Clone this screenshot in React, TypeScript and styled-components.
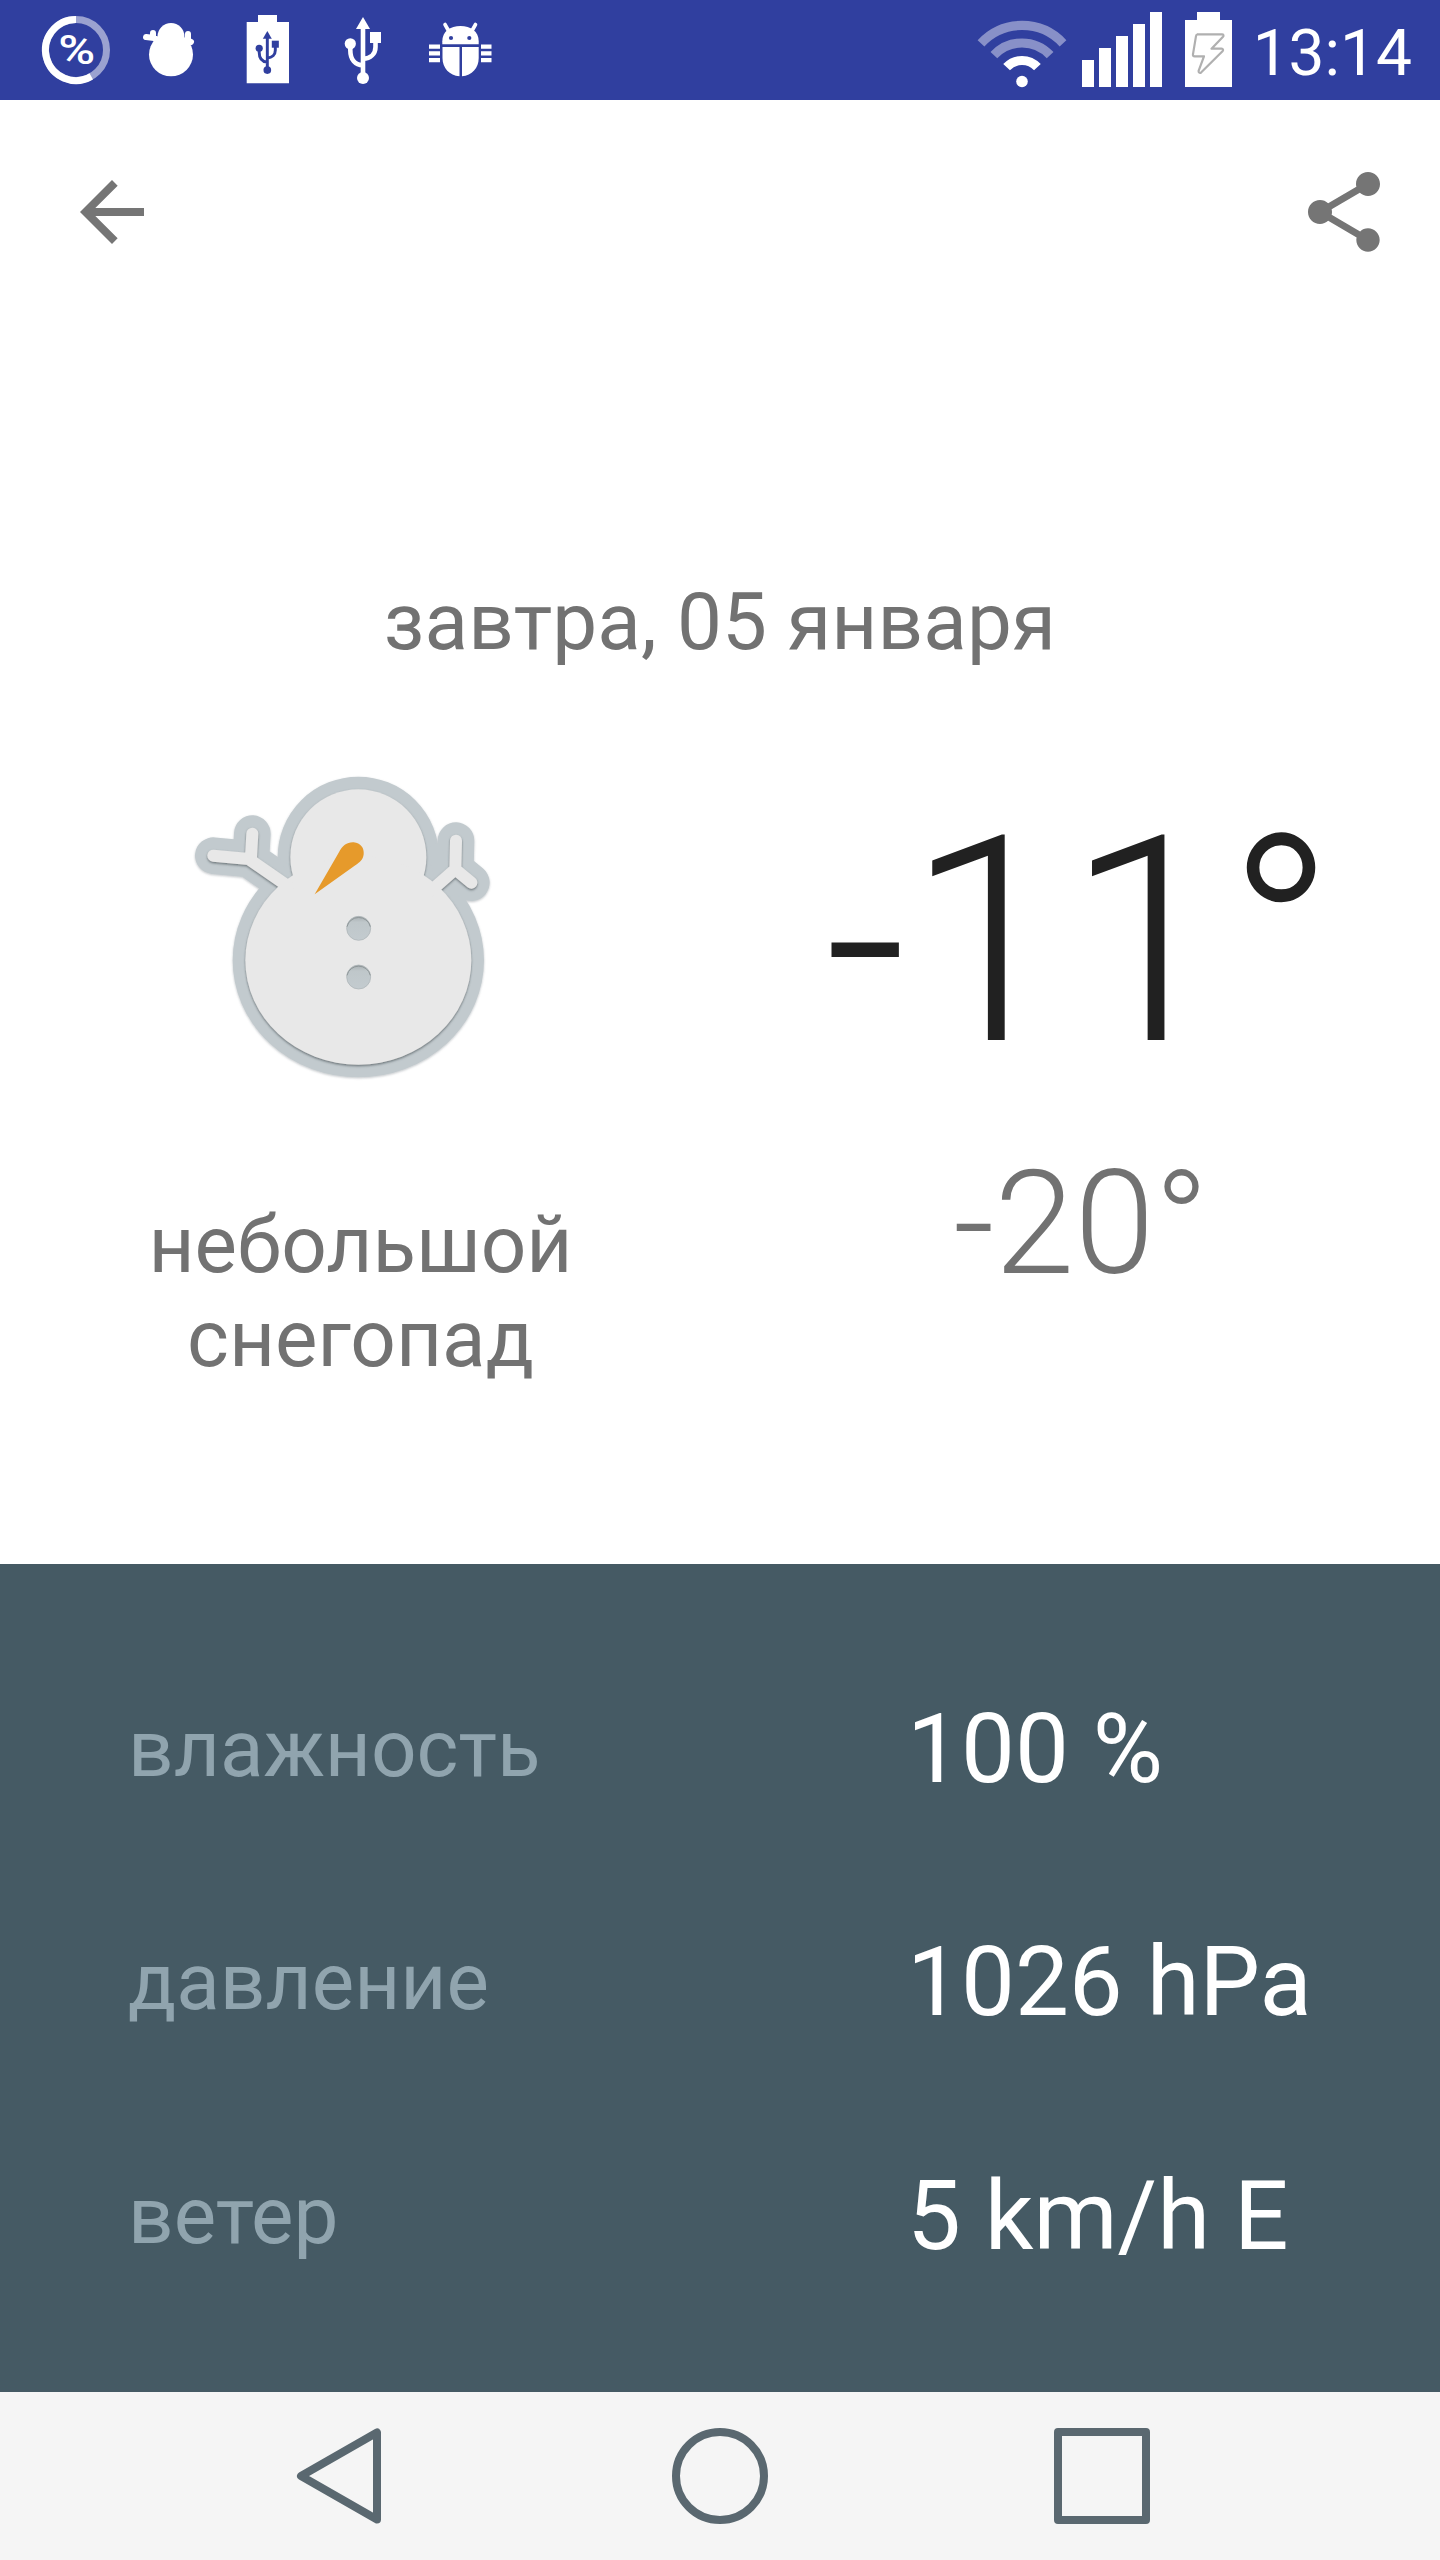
import React from 'react';
import styled, { createGlobalStyle } from 'styled-components';

const GlobalStyle = createGlobalStyle`
  * { box-sizing: border-box; }
  body { margin: 0; background: #fff; font-family: Roboto, 'Noto Sans', sans-serif; }
  svg { display: block; flex: none; }
`;

const Screen = styled.div`
  display: flex;
  flex-direction: column;
  width: 1440px;
  height: 2560px;
  overflow: hidden;
  background: #fff;
`;

const StatusBar = styled.header`
  display: flex;
  justify-content: space-between;
  height: 100px;
  padding: 0 28px;
  background: #303f9f;
  color: #fff;
`;

const StatusGroup = styled.div`
  display: flex;
`;

const Clock = styled.time`
  padding-left: 18px;
  font-size: 64px;
  line-height: 75px;
  padding-top: 16px;
`;

const Toolbar = styled.nav`
  display: flex;
  justify-content: space-between;
  align-items: center;
  height: 224px;
  padding: 0 48px 0 64px;
`;

const ToolButton = styled.button`
  width: 96px;
  height: 96px;
  padding: 0;
  border: 0;
  background: none;
  color: #757575;
`;

const Today = styled.main`
  display: flex;
  flex-direction: column;
  height: 1240px;
`;

const DateLine = styled.h1`
  margin: 251px 0 0;
  font-size: 80px;
  font-weight: 400;
  line-height: 94px;
  letter-spacing: 0.15px;
  text-align: center;
  color: #727272;
`;

const Columns = styled.section`
  display: grid;
  grid-template-columns: 1fr 1fr;
  padding-top: 71px;
`;

const Column = styled.div`
  display: flex;
  flex-direction: column;
  align-items: center;
`;

const Condition = styled.p`
  width: 480px;
  margin: 98px 0 0;
  padding-left: 1px;
  font-size: 80px;
  line-height: 94px;
  text-align: center;
  color: #727272;
`;

const HighTemp = styled.div`
  margin-top: 33px;
  font-size: 288px;
  font-weight: 300;
  line-height: 337px;
  color: #212121;
`;

const LowTemp = styled.div`
  margin-top: 29px;
  padding-left: 2px;
  font-size: 144px;
  font-weight: 300;
  line-height: 169px;
  color: #727272;
`;

const Details = styled.dl`
  display: flex;
  flex-direction: column;
  height: 828px;
  margin: 0;
  padding: 68px 0 0 128px;
  background: #455a64;
`;

const DetailRow = styled.div`
  display: grid;
  grid-template-columns: 779px 1fr;
  align-items: center;
  height: 233.500px;
`;

const DetailLabel = styled.dt`
  font-size: 80px;
  line-height: 94px;
  color: #90a4ae;
`;

const DetailValue = styled.dd`
  margin: 0;
  font-size: 96px;
  line-height: 112px;
  color: #fff;
`;

const NavBar = styled.footer`
  display: flex;
  justify-content: center;
  align-items: center;
  gap: 286px;
  height: 168px;
  background: #f5f5f5;
`;

const UsbGlyph = ({ color }: { color: string }) => (
  <g fill={color}>
    <path d="M363 17l7 12h-14z" />
    <path d="M363 28v48M350.3 44v6c0 10 5 15 12.7 15.500M375.500 40v7c0 7-5 11.500-12.500 12" fill="none" stroke={color} strokeWidth="4.600" />
    <circle cx="350.300" cy="43.800" r="5.600" />
    <path d="M370 32h11v11h-11z" />
    <circle cx="363" cy="78" r="6" />
  </g>
);

const PercentIcon = () => (
  <svg width="96" height="100" viewBox="28 0 96 100">
    <circle cx="76" cy="50" r="30.500" fill="none" stroke="#9ba2d0" strokeWidth="7" />
    <path d="M91.250 76.400A30.500 30.500 0 1 1 76 19.500" fill="none" stroke="#fff" strokeWidth="7" />
    <text x="76.700" y="64" textAnchor="middle" fontFamily="Roboto, sans-serif" fontSize="40" fontWeight="500" fill="#fff" textLength="37" lengthAdjust="spacingAndGlyphs">%</text>
  </svg>
);

const SnowmanIcon = () => (
  <svg width="96" height="100" viewBox="124 0 96 100">
    <g fill="#fff" stroke="#fff" strokeLinecap="round">
      <ellipse cx="171" cy="36.500" rx="13.500" ry="13.500" stroke="none" />
      <ellipse cx="171" cy="54.500" rx="22" ry="21.800" stroke="none" />
      <path d="M146 37l8 1 10 5M153 33v5M188 34v7l-8 6M187 40l4 2" fill="none" strokeWidth="6" />
    </g>
  </svg>
);

const UsbBatteryIcon = () => (
  <svg width="96" height="100" viewBox="220 0 96 100">
    <path d="M246.700 22h11.300v-7h19v7h12v61.300h-42.300z" fill="#fff" />
    <g transform="translate(35 20.200) scale(.64)">
      <UsbGlyph color="#303f9f" />
    </g>
  </svg>
);

const UsbIcon = () => (
  <svg width="96" height="100" viewBox="316 0 96 100">
    <UsbGlyph color="#fff" />
  </svg>
);

const BugIcon = () => (
  <svg width="96" height="100" viewBox="412 0 96 100">
    <g fill="#fff">
      <path d="M442.300 44.300v-3c0-10 8-15.300 18.200-15.300s18.200 5.300 18.200 15.300v3z" />
      <path d="M442.500 47h17v29.200c-10-.6-17-8.200-17-18.200zM462 47h16.700v11c0 10-6.700 17.600-16.700 18.200z" />
      <path d="M445 24.500l4.500 8M475.500 24.500l-4.500 8" stroke="#fff" strokeWidth="3.600" strokeLinecap="round" />
      <path d="M429 44.500h11v4.300h-11zM429 51.300h11v4.200h-11zM429 58h11v4.200h-11zM481 44.500h10.500v4.300h-10.500zM481 51.300h10.500v4.200h-10.500zM481 58h10.500v4.200h-10.500z" />
    </g>
    <circle cx="451" cy="38" r="2.100" fill="#303f9f" />
    <circle cx="469.300" cy="38" r="2.100" fill="#303f9f" />
  </svg>
);

const WifiIcon = () => (
  <svg width="98" height="100" viewBox="973 0 98 100">
    <g fill="none" strokeWidth="9.200">
      <path d="M981 43.300A56 56 0 0 1 1063 43.300" stroke="#8890c8" />
      <path d="M993.900 55.200A38.500 38.500 0 0 1 1050.100 55.200" stroke="#8890c8" />
      <path d="M1006.600 67.200A21 21 0 0 1 1037.400 67.200" stroke="#fff" />
    </g>
    <circle cx="1022" cy="81.500" r="5.800" fill="#fff" />
  </svg>
);

const SignalIcon = () => (
  <svg width="102" height="100" viewBox="1071 0 102 100">
    <path d="M1082 60h12v27h-12zM1099 48h12v39h-12zM1116 36h12v51h-12zM1133 24h12v63h-12zM1150 12h12v75h-12z" fill="#fff" />
  </svg>
);

const BatteryIcon = () => (
  <svg width="62" height="100" viewBox="1173 0 62 100">
    <path d="M1185 20h12v-8h23v8h12v67h-47z" fill="#fff" />
    <path d="M1197.500 34.300h24.500c1.500 0 2 1.300 1 2.500l-11.500 11.900h10c1.700 0 2 1.300 1 2.600l-21.200 21c-1.600 1.300-3 .2-2.700-1.500l5.400-14.500h-9.300c-1.500 0-2-.8-1.700-2.200l3-18c.2-1.200.8-1.800 1.500-1.800z" fill="none" stroke="#b0b0b0" strokeWidth="2.200" strokeLinejoin="round" />
  </svg>
);

const BackIcon = () => (
  <svg width="96" height="96" viewBox="0 0 24 24" fill="currentColor">
    <path d="M20 11H7.830l5.590-5.590L12 4l-8 8 8 8 1.410-1.410L7.830 13H20v-2z" />
  </svg>
);

const ShareIcon = () => (
  <svg width="96" height="96" viewBox="0 0 24 24" fill="currentColor">
    <path d="M18 16.080c-.76 0-1.440.3-1.960.77L8.910 12.700c.05-.23.09-.46.09-.7s-.04-.47-.09-.7l7.050-4.110c.54.5 1.250.81 2.040.81 1.660 0 3-1.340 3-3s-1.340-3-3-3-3 1.340-3 3c0 .24.04.47.09.7L8.040 9.810C7.500 9.310 6.790 9 6 9c-1.660 0-3 1.340-3 3s1.340 3 3 3c.79 0 1.500-.31 2.040-.81l7.120 4.160c-.05.21-.08.43-.08.65 0 1.610 1.310 2.920 2.920 2.920s2.920-1.310 2.920-2.920-1.310-2.920-2.920-2.920z" />
  </svg>
);

const SnowmanShape = () => (
  <>
    <ellipse cx="597" cy="351" rx="204" ry="203" />
    <ellipse cx="597" cy="661" rx="339" ry="313" />
  </>
);

const ARMS = 'M162 347L268 357L385 438M279 281L275 352M890 302L888 388L815 452M888 388L936 428';

const Snowman = () => (
  <svg width="360" height="360" viewBox="62 0 1080 1080" role="img">
    <defs>
      <filter id="rim" x="-10%" y="-10%" width="120%" height="120%">
        <feDropShadow dx="0" dy="3" stdDeviation="3" floodColor="#66727a" floodOpacity=".4" />
      </filter>
      <filter id="paper" x="-10%" y="-10%" width="120%" height="120%">
        <feDropShadow dx="0" dy="4" stdDeviation="3" floodColor="#4d575c" floodOpacity=".75" />
      </filter>
      <linearGradient id="hole" x1="0" y1="0" x2="0" y2="1">
        <stop offset="0" stopColor="#a8afb2" />
        <stop offset=".25" stopColor="#bfc7ca" />
        <stop offset="1" stopColor="#c3cbcf" />
      </linearGradient>
    </defs>
    <g filter="url(#rim)" fill="#c2cace" stroke="#c2cace" strokeWidth="76" strokeLinejoin="round" strokeLinecap="round">
      <SnowmanShape />
      <path d={ARMS} fill="none" strokeWidth="110" />
      <path d="M340 370L400 450M830 330L850 450" fill="none" strokeWidth="40" />
    </g>
    <g filter="url(#paper)" fill="#e8e8e8">
      <SnowmanShape />
      <path d={ARMS} fill="none" stroke="#e8e8e8" strokeWidth="36" strokeLinecap="round" strokeLinejoin="round" />
    </g>
    <path d="M466 463L538 338C550 316 563 306 583 307C604 309 615 324 613 343C611 360 601 367 588 376Z" fill="#e69a2b" />
    <g fill="url(#hole)" stroke="#a9b0b3" strokeWidth="2">
      <circle cx="598" cy="565" r="36" />
      <circle cx="598" cy="711" r="36" />
    </g>
    <path d="M563 560A36 36 0 0 1 633 560M563 706A36 36 0 0 1 633 706" fill="none" stroke="#8e9698" strokeWidth="3" />
  </svg>
);

const navStroke = { fill: 'none', stroke: '#5a6870', strokeWidth: 8, strokeLinejoin: 'round' as const };

const NavBack = () => (
  <svg width="96" height="96" viewBox="0 0 96 96">
    <path d="M11 48L87 4.500V91.500Z" {...navStroke} />
  </svg>
);

const NavHome = () => (
  <svg width="96" height="96" viewBox="0 0 96 96">
    <circle cx="48" cy="48" r="44" {...navStroke} />
  </svg>
);

const NavRecent = () => (
  <svg width="96" height="96" viewBox="0 0 96 96">
    <path d="M4 4H92V92H4Z" {...navStroke} />
  </svg>
);

const DETAILS = [
  { label: 'влажность', value: '100 %' },
  { label: 'давление', value: '1026 hPa' },
  { label: 'ветер', value: '5 km/h E' },
];

export default function App() {
  return (
    <Screen>
      <GlobalStyle />
      <StatusBar>
        <StatusGroup>
          <PercentIcon />
          <SnowmanIcon />
          <UsbBatteryIcon />
          <UsbIcon />
          <BugIcon />
        </StatusGroup>
        <StatusGroup>
          <WifiIcon />
          <SignalIcon />
          <BatteryIcon />
          <Clock>13:14</Clock>
        </StatusGroup>
      </StatusBar>
      <Toolbar>
        <ToolButton><BackIcon /></ToolButton>
        <ToolButton><ShareIcon /></ToolButton>
      </Toolbar>
      <Today>
        <DateLine>завтра, 05 января</DateLine>
        <Columns>
          <Column>
            <Snowman />
            <Condition>небольшой снегопад</Condition>
          </Column>
          <Column>
            <HighTemp>-11°</HighTemp>
            <LowTemp>-20°</LowTemp>
          </Column>
        </Columns>
      </Today>
      <Details>
        {DETAILS.map((d) => (
          <DetailRow key={d.label}>
            <DetailLabel>{d.label}</DetailLabel>
            <DetailValue>{d.value}</DetailValue>
          </DetailRow>
        ))}
      </Details>
      <NavBar>
        <NavBack />
        <NavHome />
        <NavRecent />
      </NavBar>
    </Screen>
  );
}
